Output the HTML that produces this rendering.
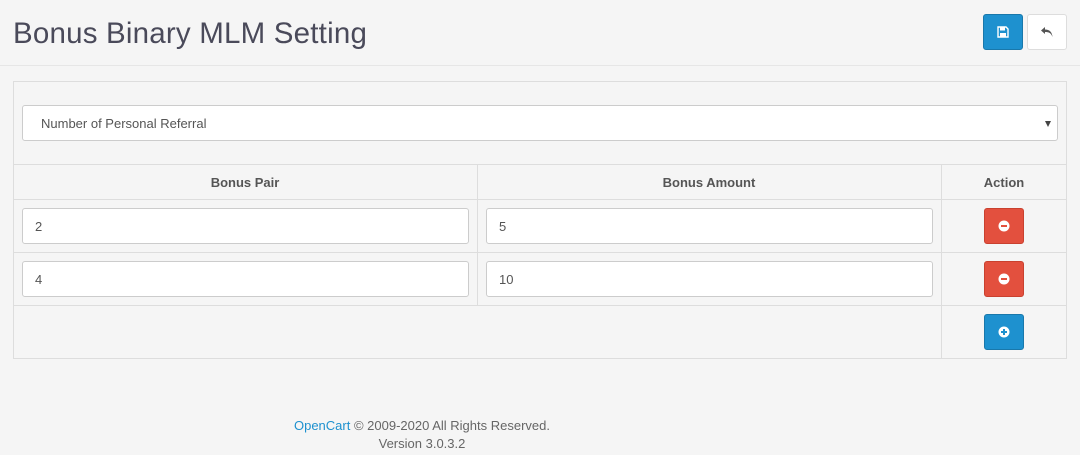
<!DOCTYPE html>
<html><head><meta charset="utf-8"><style>
*{box-sizing:border-box;margin:0;padding:0}
body{width:1080px;height:455px;background:#f5f5f5;font-family:"Liberation Sans",sans-serif;color:#666;position:relative;overflow:hidden}
.a{position:absolute}
.title{left:13px;top:17px;font-size:29.5px;color:#4a4a5a;font-weight:300;letter-spacing:0.2px}
.hr{left:0;top:65px;width:1080px;height:1px;background:#e6e6e6}
.btn{border-radius:3px;display:flex;align-items:center;justify-content:center}
.blue{background:#1e91cf;border:1px solid #1978ab}
.red{background:#e3503e;border:1px solid #c9412f}
.white{background:#fff;border:1px solid #ddd}
.panel{left:13px;top:81px;width:1054px;height:278px;border:1px solid #ddd}
.input{background:#fff;border:1px solid #ccc;border-radius:3px;font-size:13px;color:#555;padding-left:12px;display:flex;align-items:center}
.line{background:#ddd}
.th{font-size:13px;font-weight:bold;color:#555;text-align:center}
.foot{font-size:13px;color:#666;text-align:center;width:400px;left:222px}
</style></head><body>
<div class="a title">Bonus Binary MLM Setting</div>
<div class="a hr"></div>
<div class="a btn blue" style="left:983px;top:14px;width:40px;height:36px">
<svg width="12" height="12" viewBox="0 0 12 12"><path d="M1 1h8l2 2v8H1z" fill="none" stroke="#fff" stroke-width="1.4"/><rect x="3" y="1.5" width="5" height="3" fill="#fff"/><rect x="3" y="7" width="6" height="3.5" fill="#fff"/></svg></div>
<div class="a btn white" style="left:1027px;top:14px;width:40px;height:36px">
<svg width="14" height="12" viewBox="0 0 14 12"><path d="M5 1L1 4.5 5 8V6c4 0 6 1 7.5 5C12 6 9.5 3.5 5 3.5z" fill="#555"/></svg></div>
<div class="a panel"></div>
<div class="a input" style="left:22px;top:105px;width:1036px;height:36px;padding-left:18px">Number of Personal Referral</div>
<div class="a" style="left:1045px;top:121px;width:0;height:0;border-left:3.5px solid transparent;border-right:3.5px solid transparent;border-top:6px solid #444"></div>
<div class="a line" style="left:13px;top:164px;width:1054px;height:1px"></div>
<div class="a line" style="left:13px;top:199px;width:1054px;height:1px"></div>
<div class="a line" style="left:13px;top:252px;width:1054px;height:1px"></div>
<div class="a line" style="left:13px;top:305px;width:1054px;height:1px"></div>
<div class="a line" style="left:477px;top:164px;width:1px;height:141px"></div>
<div class="a line" style="left:941px;top:164px;width:1px;height:195px"></div>
<div class="a th" style="left:13px;top:175px;width:464px">Bonus Pair</div>
<div class="a th" style="left:477px;top:175px;width:464px">Bonus Amount</div>
<div class="a th" style="left:941px;top:175px;width:126px">Action</div>
<div class="a input" style="left:22px;top:208px;width:447px;height:36px">2</div>
<div class="a input" style="left:486px;top:208px;width:447px;height:36px">5</div>
<div class="a input" style="left:22px;top:261px;width:447px;height:36px">4</div>
<div class="a input" style="left:486px;top:261px;width:447px;height:36px">10</div>
<div class="a btn red" style="left:984px;top:208px;width:40px;height:36px"><svg width="12" height="12" viewBox="0 0 12 12"><circle cx="6" cy="6" r="5.5" fill="#fff"/><rect x="3" y="5" width="6" height="2" fill="#e3503e"/></svg></div>
<div class="a btn red" style="left:984px;top:261px;width:40px;height:36px"><svg width="12" height="12" viewBox="0 0 12 12"><circle cx="6" cy="6" r="5.5" fill="#fff"/><rect x="3" y="5" width="6" height="2" fill="#e3503e"/></svg></div>
<div class="a btn blue" style="left:984px;top:314px;width:40px;height:36px"><svg width="12" height="12" viewBox="0 0 12 12"><circle cx="6" cy="6" r="5.5" fill="#fff"/><rect x="3" y="5" width="6" height="2" fill="#1e91cf"/><rect x="5" y="3" width="2" height="6" fill="#1e91cf"/></svg></div>
<div class="a foot" style="top:418px"><span style="color:#1e91cf">OpenCart</span> © 2009-2020 All Rights Reserved.</div>
<div class="a foot" style="top:436px">Version 3.0.3.2</div>
</body></html>
